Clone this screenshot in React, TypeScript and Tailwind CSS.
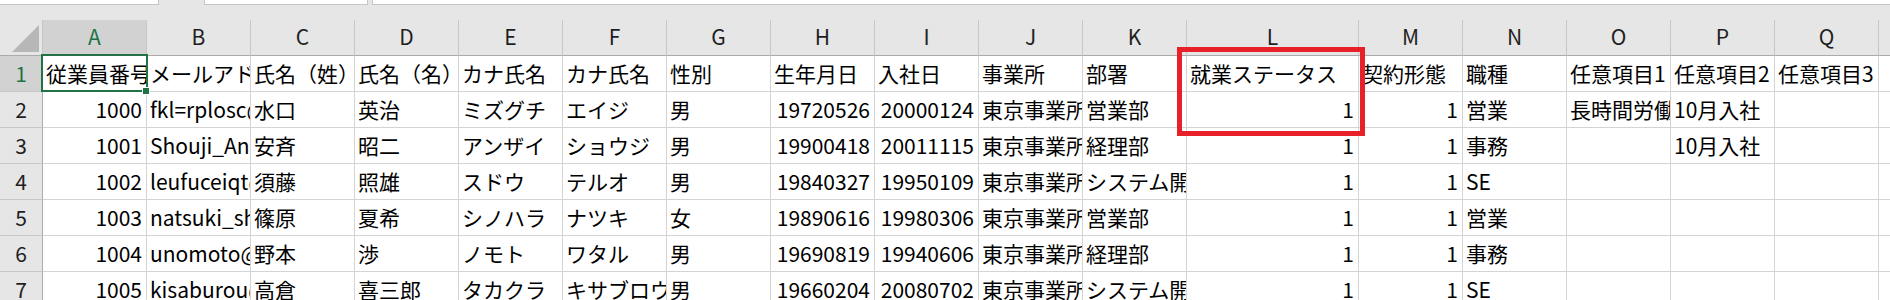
import React from "react";

type Col = { l: string; w: string };

const cols: Col[] = [
  { l: "A", w: "w-[104px]" },
  { l: "B", w: "w-[104px]" },
  { l: "C", w: "w-[104px]" },
  { l: "D", w: "w-[104px]" },
  { l: "E", w: "w-[104px]" },
  { l: "F", w: "w-[104px]" },
  { l: "G", w: "w-[104px]" },
  { l: "H", w: "w-[104px]" },
  { l: "I", w: "w-[104px]" },
  { l: "J", w: "w-[104px]" },
  { l: "K", w: "w-[104px]" },
  { l: "L", w: "w-[172px]" },
  { l: "M", w: "w-[104px]" },
  { l: "N", w: "w-[104px]" },
  { l: "O", w: "w-[104px]" },
  { l: "P", w: "w-[104px]" },
  { l: "Q", w: "w-[104px]" },
  { l: "R", w: "w-[104px]" },
];

const rows: string[][] = [
  ["従業員番号", "メールアドレス", "氏名（姓）", "氏名（名）", "カナ氏名", "カナ氏名", "性別", "生年月日", "入社日", "事業所", "部署", "就業ステータス", "契約形態", "職種", "任意項目1", "任意項目2", "任意項目3", ""],
  ["1000", "fkl=rplosc@example.jp", "水口", "英治", "ミズグチ", "エイジ", "男", "19720526", "20000124", "東京事業所", "営業部", "1", "1", "営業", "長時間労働", "10月入社", "", ""],
  ["1001", "Shouji_Anzai@example.jp", "安斉", "昭二", "アンザイ", "ショウジ", "男", "19900418", "20011115", "東京事業所", "経理部", "1", "1", "事務", "", "10月入社", "", ""],
  ["1002", "leufuceiqt@example.jp", "須藤", "照雄", "スドウ", "テルオ", "男", "19840327", "19950109", "東京事業所", "システム開発部", "1", "1", "SE", "", "", "", ""],
  ["1003", "natsuki_shinohara@example.jp", "篠原", "夏希", "シノハラ", "ナツキ", "女", "19890616", "19980306", "東京事業所", "営業部", "1", "1", "営業", "", "", "", ""],
  ["1004", "unomoto@example.jp", "野本", "渉", "ノモト", "ワタル", "男", "19690819", "19940606", "東京事業所", "経理部", "1", "1", "事務", "", "", "", ""],
  ["1005", "kisaburou@example.jp", "高倉", "喜三郎", "タカクラ", "キサブロウ", "男", "19660204", "20080702", "東京事業所", "システム開発部", "1", "1", "SE", "", "", "", ""],
];

function Cell({ v, w }: { v: string; w: string }) {
  const num = /^\d+$/.test(v);
  return (
    <div
      className={`${w} shrink-0 h-[36px] overflow-hidden whitespace-nowrap border-r border-b border-[#d4d4d4] text-[21px] leading-[35px] ${
        num ? "text-right pr-[4px] pl-[3px]" : "text-left pl-[3px]"
      }`}
    >
      {v}
    </div>
  );
}

export default function App() {
  return (
    <div className="relative w-[1890px] h-[300px] overflow-hidden bg-white text-black font-['Noto_Sans_CJK_JP',sans-serif]">
      {/* top toolbar strip */}
      <div className="h-[20px] bg-[#e6e6e6]">
        <div className="flex h-[5px]">
          <div className="w-[159px] shrink-0 bg-white border-r border-b border-[#c6c6c6]" />
          <div className="w-[45px] shrink-0" />
          <div className="w-[164px] shrink-0 bg-white border-l border-r border-b border-[#c6c6c6]" />
          <div className="w-[4px] shrink-0" />
          <div className="flex-1 bg-white border-l border-b border-[#c6c6c6]" />
        </div>
      </div>

      {/* column headers */}
      <div className="flex w-max h-[36px] bg-[#e6e6e6]">
        <div className="relative w-[43px] shrink-0 h-[36px] border-r border-b border-r-[#c6c6c6] border-b-[#ababab]">
          <svg className="absolute left-0 top-0" width="43" height="36" viewBox="0 0 43 36">
            <polygon points="12,32 39,32 39,5" fill="#b7b7b7" />
          </svg>
        </div>
        {cols.map((c) => (
          <div
            key={c.l}
            className={`${c.w} shrink-0 h-[36px] border-r border-b border-r-[#c6c6c6] border-b-[#ababab] text-center text-[21px] leading-[32px] ${
              c.l === "A" ? "bg-[#d2d2d2] text-[#217346]" : "text-[#1f1f1f]"
            }`}
          >
            {c.l}
          </div>
        ))}
      </div>

      {/* data rows */}
      {rows.map((r, i) => (
        <div key={i} className="flex w-max h-[36px]">
          <div
            className={`w-[43px] shrink-0 h-[36px] border-r border-b border-r-[#ababab] border-b-[#c6c6c6] text-center text-[21px] leading-[35px] ${
              i === 0 ? "bg-[#d2d2d2] text-[#217346]" : "bg-[#e6e6e6] text-[#1f1f1f]"
            }`}
          >
            {i + 1}
          </div>
          {r.map((v, j) => (
            <Cell key={j} v={v} w={cols[j].w} />
          ))}
        </div>
      ))}

      {/* active cell selection */}
      <div className="absolute left-[41px] top-[54px] w-[107px] h-[38px] border-2 border-[#217346]" />
      <div className="absolute left-[142px] top-[87px] w-[8px] h-[8px] bg-[#217346] border border-white" />

      {/* red annotation box */}
      <div className="absolute left-[1177px] top-[47px] w-[188px] h-[89px] border-[5px] border-[#e8202a]" />
    </div>
  );
}
